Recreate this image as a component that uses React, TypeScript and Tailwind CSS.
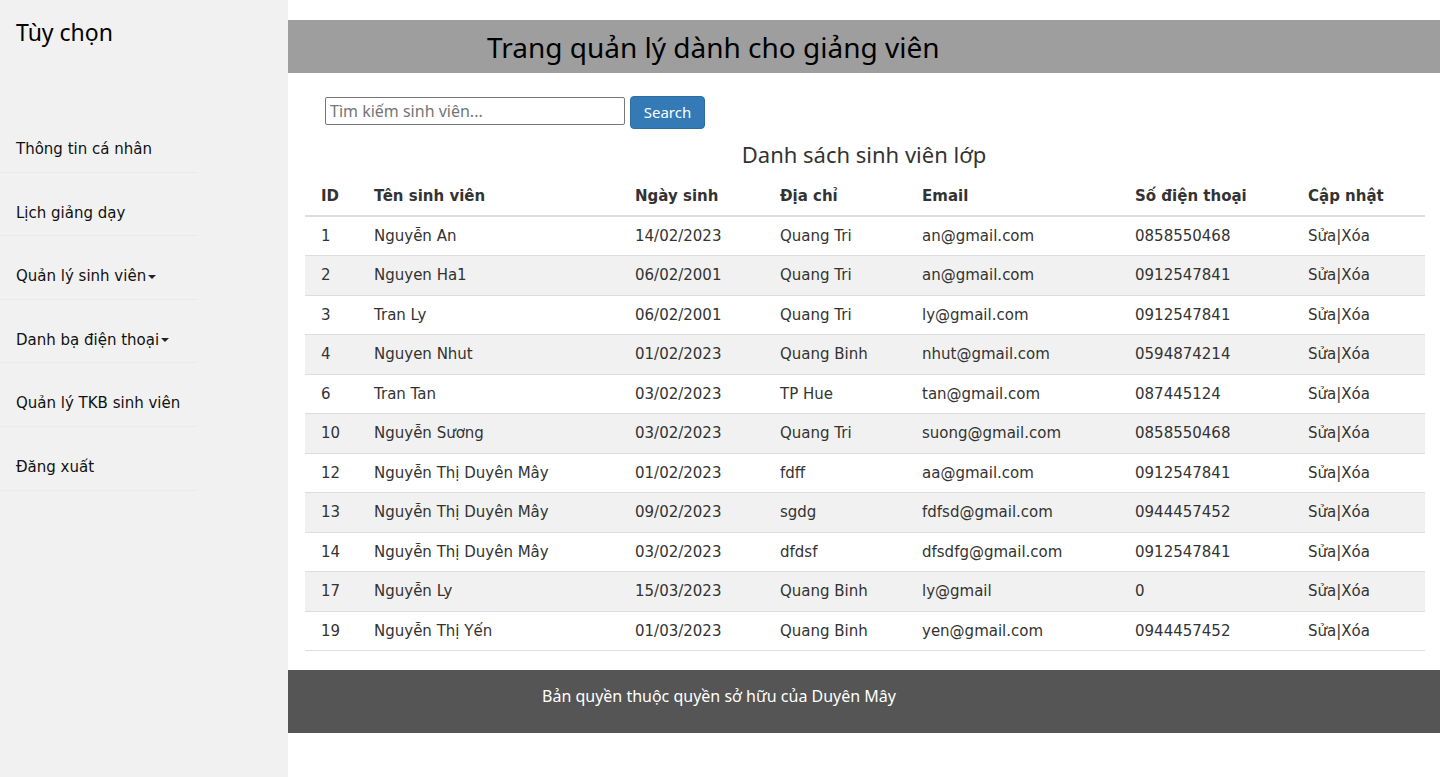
const students = [
  { id: '1', name: 'Nguyễn An', dob: '14/02/2023', addr: 'Quang Tri', email: 'an@gmail.com', phone: '0858550468' },
  { id: '2', name: 'Nguyen Ha1', dob: '06/02/2001', addr: 'Quang Tri', email: 'an@gmail.com', phone: '0912547841' },
  { id: '3', name: 'Tran Ly', dob: '06/02/2001', addr: 'Quang Tri', email: 'ly@gmail.com', phone: '0912547841' },
  { id: '4', name: 'Nguyen Nhut', dob: '01/02/2023', addr: 'Quang Binh', email: 'nhut@gmail.com', phone: '0594874214' },
  { id: '6', name: 'Tran Tan', dob: '03/02/2023', addr: 'TP Hue', email: 'tan@gmail.com', phone: '087445124' },
  { id: '10', name: 'Nguyễn Sương', dob: '03/02/2023', addr: 'Quang Tri', email: 'suong@gmail.com', phone: '0858550468' },
  { id: '12', name: 'Nguyễn Thị Duyên Mây', dob: '01/02/2023', addr: 'fdff', email: 'aa@gmail.com', phone: '0912547841' },
  { id: '13', name: 'Nguyễn Thị Duyên Mây', dob: '09/02/2023', addr: 'sgdg', email: 'fdfsd@gmail.com', phone: '0944457452' },
  { id: '14', name: 'Nguyễn Thị Duyên Mây', dob: '03/02/2023', addr: 'dfdsf', email: 'dfsdfg@gmail.com', phone: '0912547841' },
  { id: '17', name: 'Nguyễn Ly', dob: '15/03/2023', addr: 'Quang Binh', email: 'ly@gmail', phone: '0' },
  { id: '19', name: 'Nguyễn Thị Yến', dob: '01/03/2023', addr: 'Quang Binh', email: 'yen@gmail.com', phone: '0944457452' },
];

const menu = [
  { label: 'Thông tin cá nhân' },
  { label: 'Lịch giảng dạy' },
  { label: 'Quản lý sinh viên', caret: true },
  { label: 'Danh bạ điện thoại', caret: true },
  { label: 'Quản lý TKB sinh viên' },
  { label: 'Đăng xuất' },
];

const cols = [
  { label: 'ID', w: 'w-[53px]' },
  { label: 'Tên sinh viên', w: 'w-[261px]' },
  { label: 'Ngày sinh', w: 'w-[145px]' },
  { label: 'Địa chỉ', w: 'w-[142px]' },
  { label: 'Email', w: 'w-[213px]' },
  { label: 'Số điện thoại', w: 'w-[173px]' },
  { label: 'Cập nhật', w: 'w-[133px]' },
];

const verdana = "font-['DejaVu_Sans',Verdana,sans-serif]";
const segoe = "font-['Noto_Sans','Open_Sans',sans-serif]";

function Caret() {
  return (
    <span className="inline-block align-middle ml-[2px] w-0 h-0 border-l-[4px] border-r-[4px] border-t-[4px] border-l-transparent border-r-transparent border-t-[#222]" />
  );
}

export default function App() {
  return (
    <div className="flex min-h-screen bg-white text-[#333]">
      <aside className={`w-[288px] shrink-0 bg-[#f1f1f1] ${verdana}`}>
        <h2 className={`${segoe} pl-4 pt-[15px] text-[23px] leading-[34px] text-black`}>
          Tùy chọn
        </h2>
        <nav className="mt-[60px]">
          {menu.map((item) => (
            <a
              key={item.label}
              href="#"
              className="block w-[197px] h-[63.6px] pl-4 pt-[30px] text-[15px] leading-[20px] text-[#111] border-b border-[#eaeaea]"
            >
              {item.label}
              {item.caret && <Caret />}
            </a>
          ))}
        </nav>
      </aside>

      <main className="flex-1 min-w-0 pt-5">
        <header className="h-[53px] bg-[#9e9e9e] pl-[199px] flex items-center">
          <h1 className={`${segoe} text-[28px] text-black leading-none`}>
            Trang quản lý dành cho giảng viên
          </h1>
        </header>

        <div className="flex items-start gap-[5px] pl-[37px] pt-[23px]">
          <input
            type="text"
            placeholder="Tìm kiếm sinh viên..."
            className={`${segoe} mt-[1px] w-[300px] h-[28px] border border-[#767676] rounded-[2px] px-1 text-[16px] text-[#333] placeholder:text-[#757575]`}
          />
          <button
            type="button"
            className={`${segoe} h-[33px] w-[75px] bg-[#337ab7] border border-[#2e6da4] rounded-[4px] text-white text-[15px]`}
          >
            Search
          </button>
        </div>

        <h3 className={`${segoe} text-center text-[22px] leading-[30px] mt-[10px] text-[#333]`}>
          Danh sách sinh viên lớp
        </h3>

        <div className="pl-[17px] pr-[15px] mt-[8px]">
          <table className={`w-[1120px] border-collapse ${verdana} text-[15px] text-[#333]`}>
            <thead>
              <tr className="h-[39px] border-b-2 border-[#ddd]">
                {cols.map((c) => (
                  <th key={c.label} className={`${c.w} pl-4 text-left font-bold`}>
                    {c.label}
                  </th>
                ))}
              </tr>
            </thead>
            <tbody>
              {students.map((s, i) => (
                <tr
                  key={s.id}
                  className={`h-[39.5px] border-b border-[#ddd] ${i % 2 === 1 ? 'bg-[#f1f1f1]' : 'bg-white'}`}
                >
                  <td className="pl-4">{s.id}</td>
                  <td className="pl-4">{s.name}</td>
                  <td className="pl-4">{s.dob}</td>
                  <td className="pl-4">{s.addr}</td>
                  <td className="pl-4">{s.email}</td>
                  <td className="pl-4">{s.phone}</td>
                  <td className="pl-4">Sửa|Xóa</td>
                </tr>
              ))}
            </tbody>
          </table>
        </div>

        <footer className="mt-[19px] h-[63px] bg-[#555] pl-[254px] pt-[14px]">
          <p className={`${segoe} text-white text-[16px] leading-[24px]`}>
            Bản quyền thuộc quyền sở hữu của Duyên Mây
          </p>
        </footer>
      </main>
    </div>
  );
}
